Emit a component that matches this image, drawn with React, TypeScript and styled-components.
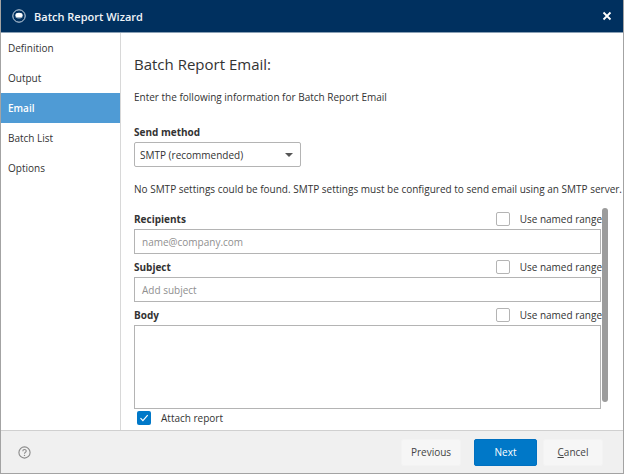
import React from "react";
import styled, { createGlobalStyle } from "styled-components";

const Global = createGlobalStyle`
  html, body { margin: 0; padding: 0; background: #fff; }
  #root { width: 624px; height: 474px; }
  * { box-sizing: border-box; }
`;

const Window = styled.div`
  width: 624px; height: 474px; display: flex; flex-direction: column;
  font-family: "Open Sans", "Noto Sans", sans-serif; font-size: 10px; color: #333;
  border: 1px solid #a3a3a3; border-top: 0; background: #fff; overflow: hidden;
`;
const TitleBar = styled.header`
  height: 33px; flex: none; margin: 0 -1px; background: #00305f; color: #fff;
  display: flex; align-items: center; padding: 0 12px; gap: 8px; border-bottom: 1px solid #8aa0b5;
`;
const TitleText = styled.div`
  font-size: 11px; font-weight: 600; flex: 1; color: #f0f4f8;
`;
const CloseButton = styled.button`
  width: 12px; height: 12px; padding: 0; border: 0; background: none; display: flex; margin-right: -1px;
`;
const Main = styled.div`
  flex: 1; display: flex; min-height: 0;
`;
const Sidebar = styled.nav`
  width: 120px; flex: none; border-right: 1px solid #d8d8d8; display: flex; flex-direction: column;
`;
const NavItem = styled.div<{ $active?: boolean }>`
  height: 30px; padding: 0 7px; display: flex; align-items: center;
  margin-top: ${p => (p.$active ? "0" : "0")};
  background: ${p => (p.$active ? "#4f9bd5" : "transparent")};
  color: ${p => (p.$active ? "#fff" : "#333")};
  font-weight: ${p => (p.$active ? 600 : 400)};
`;
const Content = styled.section`
  flex: 1; position: relative; padding: 21px 22px 0 13px; min-width: 0;
`;
const Heading = styled.h1`
  margin: 0 0 16px; font-size: 15px; font-weight: 400; line-height: 20px; color: #333;
`;
const Intro = styled.p`
  margin: 0 0 21px; line-height: 14px;
`;
const Strong = styled.div`
  font-weight: 700; line-height: 14px; color: #333;
`;
const SelectBox = styled.div`
  width: 167px; height: 25px; margin-top: 3px; border: 1px solid #b4b4b4; border-radius: 2px;
  display: flex; align-items: center; justify-content: space-between; padding: 0 5px 0 5px;
`;
const Caret = styled.span`
  width: 0; height: 0; border-left: 4px solid transparent; border-right: 4px solid transparent;
  border-top: 4px solid #555; margin-right: 2px;
`;
const Notice = styled.p`
  margin: 15px 0 0; line-height: 14px; white-space: nowrap;
`;
const FieldHead = styled.div`
  display: flex; align-items: center; justify-content: space-between; height: 21px;
`;
const NamedRange = styled.div`
  display: flex; align-items: center; gap: 10px; white-space: nowrap; margin-right: -1px;
`;
const Box = styled.span`
  width: 14px; height: 14px; border: 1px solid #b4b4b4; border-radius: 2px; background: #fff; display: block;
`;
const FieldInput = styled.div<{ $h?: number }>`
  height: ${p => p.$h ?? 25}px; border: 1px solid #b4b4b4; padding: 0 7px; display: flex; align-items: center;
  color: #8f8f8f; margin-bottom: 2px;
`;
const AttachRow = styled.div`
  display: flex; align-items: center; gap: 10px; padding-left: 3px; margin-top: 2px;
`;
const Checked = styled.span`
  width: 14px; height: 14px; border-radius: 2px; background: #0078c8; display: flex; align-items: center; justify-content: center;
`;
const Scrollbar = styled.div`
  position: absolute; left: 481px; top: 175px; width: 6px; height: 194px; background: #9c9c9c; border-radius: 3px;
`;
const Footer = styled.footer`
  height: 43px; flex: none; background: #f0f0f0; border-top: 1px solid #d0d0d0;
  display: flex; align-items: center; padding: 0 20px 0 17px;
`;
const Spacer = styled.div`flex: 1;`;
const Btn = styled.button<{ $primary?: boolean }>`
  height: 27px; font: inherit; border-radius: 2px; padding: 0;
  border: 1px solid ${p => (p.$primary ? "#0070c0" : "#f3f3f3")};
  background: ${p => (p.$primary ? "#0078c8" : "#f6f6f6")};
  color: ${p => (p.$primary ? "#fff" : "#444")};
  width: ${p => (p.$primary ? 63 : 60)}px;
  margin-left: ${p => (p.$primary ? 13 : 0)}px;
  margin-right: ${p => (p.$primary ? 6 : 0)}px;
`;

const Range = () => (
  <NamedRange><Box /><span>Use named range</span></NamedRange>
);

export default function App() {
  return (
    <>
      <Global />
      <Window>
        <TitleBar>
          <svg width="14" height="14" viewBox="0 0 14 14">
            <circle cx="7" cy="7" r="6.2" fill="none" stroke="#cfdbe6" strokeWidth="1" />
            <ellipse cx="7" cy="6.2" rx="3.6" ry="2.4" fill="#fff" />
            <path d="M3.4 7.8c1 1.6 6.2 1.6 7.2 0" fill="none" stroke="#aebfcf" strokeWidth="1" />
          </svg>
          <TitleText>Batch Report Wizard</TitleText>
          <CloseButton aria-label="Close">
            <svg width="12" height="12" viewBox="0 0 12 12">
              <path d="M2.5 2.5l7 7M9.5 2.5l-7 7" stroke="#fff" strokeWidth="1.8" />
            </svg>
          </CloseButton>
        </TitleBar>
        <Main>
          <Sidebar>
            <NavItem>Definition</NavItem>
            <NavItem>Output</NavItem>
            <NavItem $active>Email</NavItem>
            <NavItem>Batch List</NavItem>
            <NavItem>Options</NavItem>
          </Sidebar>
          <Content>
            <Heading>Batch Report Email:</Heading>
            <Intro>Enter the following information for Batch Report Email</Intro>
            <Strong>Send method</Strong>
            <SelectBox>SMTP (recommended)<Caret /></SelectBox>
            <Notice>No SMTP settings could be found. SMTP settings must be configured to send email using an SMTP server.</Notice>
            <div style={{ height: 12 }} />
            <FieldHead><Strong>Recipients</Strong><Range /></FieldHead>
            <FieldInput>name@company.com</FieldInput>
            <FieldHead><Strong>Subject</Strong><Range /></FieldHead>
            <FieldInput>Add subject</FieldInput>
            <FieldHead><Strong>Body</Strong><Range /></FieldHead>
            <FieldInput $h={84} />
            <AttachRow>
              <Checked>
                <svg width="10" height="10" viewBox="0 0 10 10">
                  <path d="M1.5 5.2l2.4 2.4 4.8-5.4" fill="none" stroke="#fff" strokeWidth="1.2" />
                </svg>
              </Checked>
              <span>Attach report</span>
            </AttachRow>
            <Scrollbar />
          </Content>
        </Main>
        <Footer>
          <svg width="13" height="13" viewBox="0 0 13 13">
            <circle cx="6.5" cy="6.5" r="5.6" fill="none" stroke="#8a8a8a" strokeWidth="1.1" />
            <path d="M4.8 5.2c0-2.2 3.4-2.2 3.4-.1 0 1.3-1.7 1.3-1.7 2.6" fill="none" stroke="#8a8a8a" strokeWidth="1.1" />
            <circle cx="6.5" cy="9.4" r=".7" fill="#8a8a8a" />
          </svg>
          <Spacer />
          <Btn>Previous</Btn>
          <Btn $primary>Next</Btn>
          <Btn><u>C</u>ancel</Btn>
        </Footer>
      </Window>
    </>
  );
}
